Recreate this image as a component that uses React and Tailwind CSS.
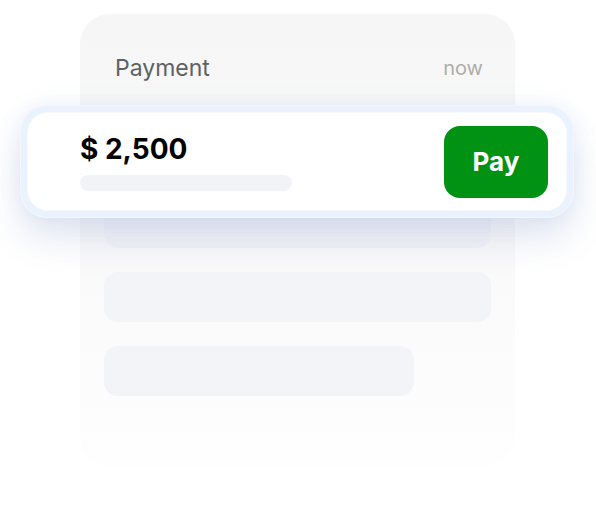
export default function App() {
  const rows = [
    { id: 0, w: 'w-full' },
    { id: 1, w: 'w-full' },
    { id: 2, w: 'w-full' },
    { id: 3, w: 'w-[310px]' },
  ]

  return (
    <div className="relative w-[596px] h-[512px] bg-white overflow-hidden font-['Inter','Liberation_Sans',sans-serif]">
      {/* background card */}
      <div className="ml-[80px] mt-[14px] w-[435px] h-[452px] rounded-[30px] bg-gradient-to-b from-[#f6f6f6] via-[#f9f9f9] to-[#fefefe] pt-[40px]">
        <div className="flex items-center justify-between pl-[35px] pr-[32px]">
          <span className="text-[23px] leading-[28px] text-[#5d6166]">Payment</span>
          <span className="text-[20px] leading-[28px] text-[#adadad]">now</span>
        </div>
        <div className="mt-[42px] px-[24px] flex flex-col gap-[24px]">
          {rows.map((r) => (
            <div key={r.id} className={`${r.w} h-[50px] rounded-[14px] bg-[#f3f4f8]`} />
          ))}
        </div>
      </div>

      {/* payment card */}
      <div className="absolute left-[21px] top-[106px] w-[552px] h-[111px] rounded-[26px] bg-[#eaf3fd] p-[7px] shadow-[0_22px_36px_rgba(80,105,170,0.16),0_0_22px_rgba(130,165,225,0.14)] ring-1 ring-[#f2f7fe]">
        <div className="h-full rounded-[20px] bg-white flex items-center justify-between pl-[52px] pr-[18px] shadow-[0_0_0_1px_#f5f9fe]">
          <div className="flex flex-col">
            <span className="text-[28px] leading-[34px] font-bold text-black">$ 2,500</span>
            <div className="mt-[9px] w-[212px] h-[16px] rounded-full bg-[#f2f3f7]" />
          </div>
          <button className="w-[104px] h-[72px] rounded-[16px] bg-[#019113] text-white text-[26px] font-bold">
            Pay
          </button>
        </div>
      </div>
    </div>
  )
}
